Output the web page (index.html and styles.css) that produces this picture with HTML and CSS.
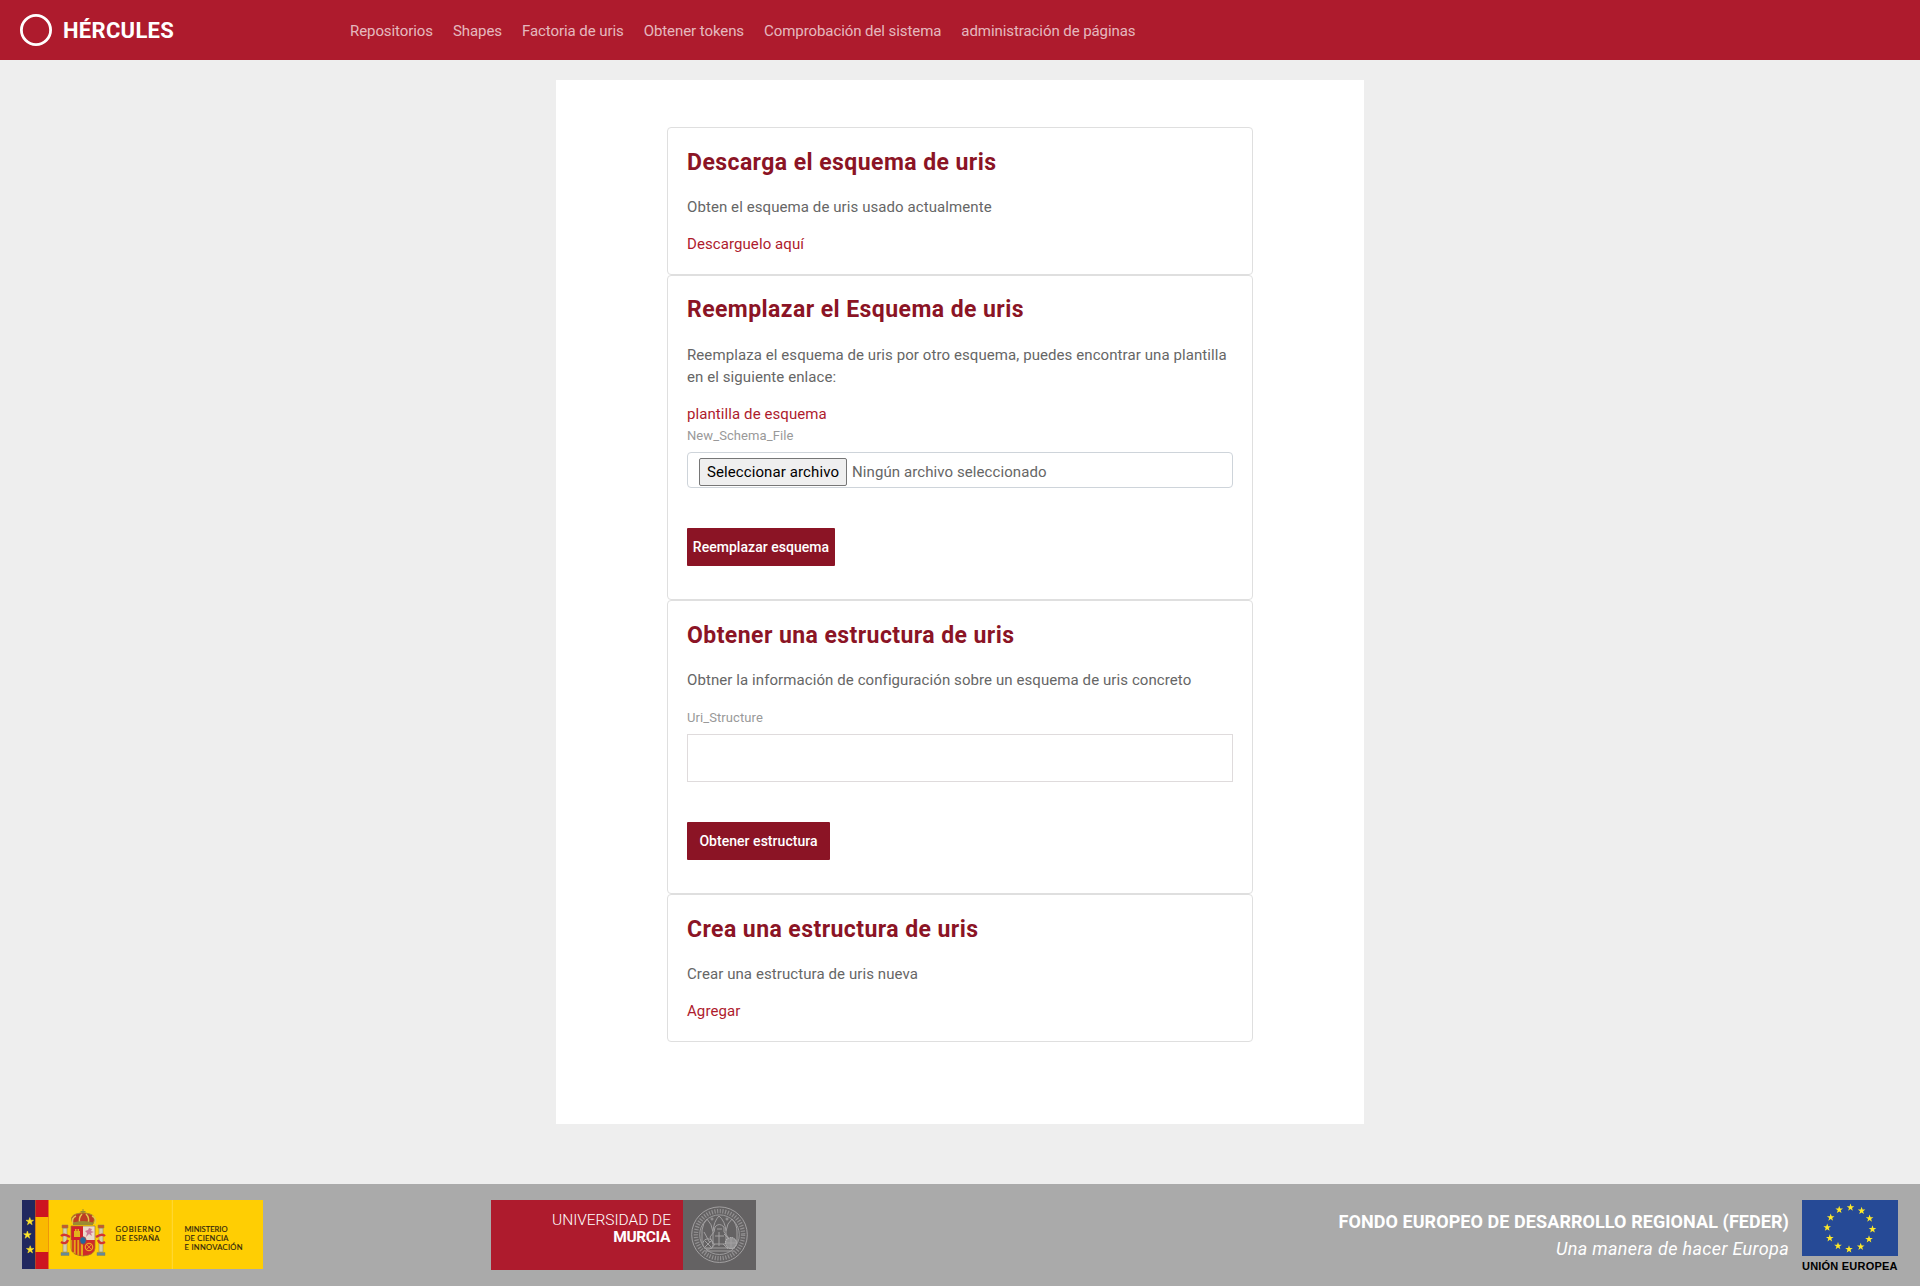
FILE: index.html
```html
<!DOCTYPE html>
<html lang="es">
<head>
<meta charset="utf-8">
<title>Hércules</title>
<link rel="stylesheet" href="styles.css">
</head>
<body>
<header class="header">
  <a class="brand">
    <svg class="brand-ring" viewBox="0 0 32 32"><circle cx="16" cy="16" r="14.6" fill="none" stroke="#fff" stroke-width="2.8"/></svg>
    <span class="brand-name">HÉRCULES</span>
  </a>
  <nav class="nav">
    <a>Repositorios</a><a>Shapes</a><a>Factoria de uris</a><a>Obtener tokens</a><a>Comprobación del sistema</a><a>administración de páginas</a>
  </nav>
</header>

<main class="main">
  <section class="card">
    <h2>Descarga el esquema de uris</h2>
    <p>Obten el esquema de uris usado actualmente</p>
    <a class="link">Descarguelo aquí</a>
  </section>
  <section class="card card-replace">
    <h2>Reemplazar el Esquema de uris</h2>
    <p>Reemplaza el esquema de uris por otro esquema, puedes encontrar una plantilla en el siguiente enlace:</p>
    <a class="link">plantilla de esquema</a>
    <label class="label">New_Schema_File</label>
    <div class="file"><button class="file-button">Seleccionar archivo</button><span>Ningún archivo seleccionado</span></div>
    <button class="button button-tight">Reemplazar esquema</button>
  </section>
  <section class="card card-structure">
    <h2>Obtener una estructura de uris</h2>
    <p>Obtner la información de configuración sobre un esquema de uris concreto</p>
    <label class="label">Uri_Structure</label>
    <input class="input" type="text">
    <button class="button">Obtener estructura</button>
  </section>
  <section class="card">
    <h2>Crea una estructura de uris</h2>
    <p>Crear una estructura de uris nueva</p>
    <a class="link">Agregar</a>
  </section>
</main>

<footer class="footer">
  <svg class="logo-gob" viewBox="0 0 241 69">
    <defs><path id="star" d="M0-4 .95-1.3 3.8-1.25 1.5.5 2.35 3.25 0 1.6-2.35 3.25-1.5.5-3.8-1.25-.95-1.3Z"/></defs>
    <rect width="241" height="69" fill="#ffce03"/>
    <rect width="13.5" height="69" fill="#21285f"/>
    <rect x="13.5" width="13" height="69" fill="#cd1420"/>
    <rect x="13.5" y="17" width="13" height="35" fill="#fab900"/>
    <g fill="#ffe62b" stroke="#ffe62b" stroke-width=".5"><use href="#star" x="7.8" y="21.5"/><use href="#star" x="5.4" y="35"/><use href="#star" x="8.2" y="49.7"/></g>
    <path d="M150.3 0V69" stroke="#ffda3c"/>
    <!-- pillars -->
    <g fill="#d5cfaa" stroke="#8c8254" stroke-width=".5">
      <path d="M41 28h4v24h-4zM77 28h4v24h-4z"/>
      <path d="M39 52.5h8v3h-8zM75 52.5h8v3h-8z" fill="#648b99"/>
      <path d="M40 25h6v3h-6zM76 25h6v3h-6z" fill="#c95a24"/>
    </g>
    <path d="M39 36q3-3 9 1M39 42q5 3 7-2M83 36q-3-3-9 1M83 42q-5 3-7-2" fill="none" stroke="#d5352e" stroke-width="2.4"/>
    <!-- shield -->
    <path d="M49 26h12v14H49z" fill="#d3222c"/><path d="M61 26h12v14H61z" fill="#ead9cc"/>
    <path d="M49 40h12v16q-12-1-12-8z" fill="#e6a516"/><path d="M61 40h12v8q0 7-12 8z" fill="#cf2b2a"/>
    <path d="M51 40v12M54.5 40v15M58 40v16" stroke="#cd2e23" stroke-width="1.6"/>
    <path d="M52 37v-6h1v-2h1.500v2h1v-2h1.500v2h1v6z" fill="#e2b51c"/>
    <path d="m64 37 1-4-2-2 3-1 1-2 3 1-1 2 3 1-3 1 1 3-3-2z" fill="#cf7592"/>
    <circle cx="67" cy="47" r="3.7" fill="none" stroke="#efa424" stroke-width="1.2"/><path d="m64 44 6 6m0-6-6 6" stroke="#efa424" stroke-width=".8"/>
    <ellipse cx="61" cy="40.5" rx="3.2" ry="3.8" fill="#25679c" stroke="#c3382e" stroke-width=".7"/>
    <path d="M49 26h24v22q0 7-12 8-12-1-12-8z" fill="none" stroke="#a17825" stroke-width=".7"/>
    <!-- crown -->
    <path d="M51 24q-4-8 3-10 7-3 14 0 7 2 3 10z" fill="#bd3d24" stroke="#a98e27"/>
    <path d="M51 24q-2-6 3-8m4 8q-2-6 2-10m13 10q2-6-3-8m-4 8q2-6-2-10" fill="none" stroke="#e3c64b" stroke-width="1.5"/>
    <path d="M51 22.5q10-3 20 0v2.5H51zM60.500 9h1v2h2v1h-2v2h-1v-2h-2v-1h2z" fill="#9b8b32"/>
    <g class="gob-text"><text x="115.5" y="31.7" textLength="45" transform="translate(-22 0)">GOBIERNO</text><text x="93.5" y="40.7" textLength="44">DE ESPAÑA</text>
    <text x="162.5" y="31.7" textLength="43">MINISTERIO</text><text x="162.5" y="40.7" textLength="44">DE CIENCIA</text><text x="162.5" y="49.7" textLength="58">E INNOVACIÓN</text></g>
  </svg>

  <svg class="logo-um" viewBox="0 0 265 70">
    <rect width="192" height="70" fill="#ae1b2d"/><rect x="192" width="73" height="70" fill="#646263"/>
    <text class="um-light" x="61" y="25" textLength="119">UNIVERSIDAD DE</text>
    <text class="um-bold" x="122.3" y="42" textLength="57">MURCIA</text>
    <!-- university seal -->
    <g fill="none" stroke="#a2a0a1">
      <circle cx="228.5" cy="34.7" r="27.8" stroke-width="1"/>
      <circle cx="228.5" cy="34.7" r="23.6" stroke-width="4.4" stroke-dasharray="1.2 1.5" stroke="#929091"/>
      <circle cx="228.5" cy="34.7" r="19.8" stroke-width=".9"/>
      <path d="M211 43V30q1-7 5-11 5 5 6 13v12M222 31q1-10 6-15 6 5 7 15M235 44V31q1-8 6-12 5 5 5 13v11M213 48h31M214 51h29"/>
      <path d="M224 27q4-5 9 0v5l4 5-3 7h-12l-3-7 4-5zM224 36h9M219 43l-6-11M233 34l5 5M224 44l-4 5M232 44l5 5M226 29h5M228 32v14"/>
      <circle cx="217" cy="44" r="5.2"/><circle cx="240" cy="43" r="5.5" fill="#919091" stroke="#c6c5c6" stroke-dasharray="1.4 .8"/>
      <circle cx="221" cy="19" r="1"/><circle cx="236" cy="19" r="1"/>
      <path d="m214 41 6 6m0-6-6 6m20-4h12m-6-6v12"/>
    </g>
  </svg>

  <div class="feder">
    <div class="feder-text"><strong>FONDO EUROPEO DE DESARROLLO REGIONAL (FEDER)</strong><em>Una manera de hacer Europa</em></div>
    <svg class="logo-eu" viewBox="0 0 96 72">
      <rect width="96" height="56" fill="#264a96"/>
      <g fill="#ffe928">
        <use href="#star" x="48.5" y="7.5"/><use href="#star" x="59.6" y="10.8"/><use href="#star" x="67.6" y="18.5"/><use href="#star" x="70.5" y="29.3"/><use href="#star" x="67" y="39.2"/><use href="#star" x="58.7" y="46.7"/>
        <use href="#star" x="47" y="49.3"/><use href="#star" x="36" y="46"/><use href="#star" x="27.8" y="38.2"/><use href="#star" x="25.2" y="27.6"/><use href="#star" x="28.7" y="17.5"/><use href="#star" x="37.2" y="9.8"/>
      </g>
      <text class="eu-text" x="0" y="70" textLength="95.5">UNIÓN EUROPEA</text>
    </svg>
  </div>
</footer>
</body>
</html>
```
FILE: styles.css
```css
* { box-sizing: border-box; }
body {
  margin: 0;
  min-height: 1286px;
  display: flex;
  flex-direction: column;
  background: #eee;
  color: #666;
  font: 15px/22px Roboto, "Liberation Sans", sans-serif;
  letter-spacing: .085px;
}
.header {
  height: 60px;
  flex: none;
  display: flex;
  align-items: center;
  padding-left: 20px;
  background: #ae1b2d;
}
.brand { width: 330px; display: flex; align-items: center; gap: 11px; }
.brand-ring { width: 32px; height: 32px; }
.brand-name { padding-top: 2px; color: #fff; font-size: 22px; font-weight: 700; letter-spacing: .3px; }
.nav { display: flex; gap: 20px; padding-top: 2px; color: rgba(255, 255, 255, .7); letter-spacing: -.075px; }
.main {
  width: 808px;
  height: 1044px;
  flex: none;
  margin: 20px auto 60px;
  padding: 47px 111px 0;
  background: #fff;
}
.card {
  height: 148px;
  padding: 20px 19px 0;
  display: flex;
  flex-direction: column;
  align-items: flex-start;
  border: 1px solid #dfdfdf;
  border-radius: 4px;
}
.card-replace { height: 325px; padding-top: 19px; }
.card-replace h2 { margin-bottom: 20px; }
.card-structure { height: 294px; }
.card-structure p { margin-bottom: 16px; }
h2 {
  margin: 0 0 19px;
  color: #8b1425;
  font-size: 23px;
  line-height: 29px;
  font-weight: 700;
  letter-spacing: .43px;
}
p { margin: 0 0 15px; }
.link { color: #ae1b2d; }
.label { color: #999; font-size: 13px; margin-bottom: 5px; }
.file {
  width: 100%;
  height: 36px;
  display: flex;
  align-items: center;
  gap: 5px;
  padding: 4px 11px 0;
  border: 1px solid #ced4da;
  border-radius: 4px;
}
.file-button {
  width: 148px;
  height: 28px;
  padding: 0;
  color: #000;
  font: inherit;
  letter-spacing: .1px;
  background: #efefef;
  border: 1px solid #767676;
  border-radius: 2px;
}
.input { width: 100%; height: 48px; border: 1px solid #dfdbdc; }
.button {
  width: 143px;
  height: 38px;
  margin-top: 40px;
  padding: 0;
  color: #fff;
  font: 500 14px Roboto, "Liberation Sans", sans-serif;
  letter-spacing: .04px;
  background: #8b1425;
  border: 0;
  border-radius: 1px;
}
.button-tight { width: 148px; }
.footer {
  height: 102px;
  flex: none;
  display: flex;
  padding: 16px 22px 0;
  background: #aaa;
  letter-spacing: 0;
}
.logo-gob { width: 241px; height: 69px; margin-right: 228px; }
.logo-um { width: 265px; height: 70px; }
.gob-text { font: 7.6px Lato, sans-serif; fill: #30250e; stroke: #30250e; stroke-width: .15px; }
.um-light { font: 300 15.5px Roboto, sans-serif; fill: #fff; }
.um-bold { font: 700 15.5px Roboto, sans-serif; fill: #fff; }
.feder { margin-left: auto; display: flex; gap: 13px; }
.feder-text {
  display: flex;
  flex-direction: column;
  align-items: flex-end;
  padding-top: 8px;
  color: #fff;
  font-size: 18px;
  line-height: 27px;
}
.feder-text strong { font-weight: 700; letter-spacing: .07px; }
.feder-text em { letter-spacing: .35px; }
.logo-eu { width: 96px; height: 72px; }
.eu-text { font: 700 11px "Liberation Sans", sans-serif; fill: #000; }
```
